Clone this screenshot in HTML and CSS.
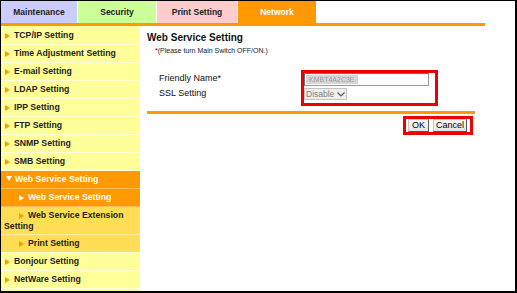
FILE: index.html
```html
<!DOCTYPE html>
<html lang="en">
<head>
    <meta charset="UTF-8">
    <title>Web Service Setting</title>
    <link rel="stylesheet" href="styles.css">
</head>
<body>
    <div class="frame">
        <div class="tabs">
            <div class="tab tab-maint">Maintenance</div>
            <div class="tab tab-sec">Security</div>
            <div class="tab tab-print">Print Setting</div>
            <div class="tab tab-net">Network</div>
        </div>

        <div class="page">
            <ul class="menu">
                <li class="item"><span class="arrow"></span>TCP/IP Setting</li>
                <li class="item"><span class="arrow"></span>Time Adjustment Setting</li>
                <li class="item"><span class="arrow"></span>E-mail Setting</li>
                <li class="item"><span class="arrow"></span>LDAP Setting</li>
                <li class="item"><span class="arrow"></span>IPP Setting</li>
                <li class="item"><span class="arrow"></span>FTP Setting</li>
                <li class="item"><span class="arrow"></span>SNMP Setting</li>
                <li class="item"><span class="arrow"></span>SMB Setting</li>
                <li class="item open"><span class="arrow down"></span>Web Service Setting</li>
                <li class="item sub current"><span class="arrow"></span>Web Service Setting</li>
                <li class="item sub wrap"><span class="arrow"></span>Web Service Extension Setting</li>
                <li class="item sub"><span class="arrow"></span>Print Setting</li>
                <li class="item"><span class="arrow"></span>Bonjour Setting</li>
                <li class="item"><span class="arrow"></span>NetWare Setting</li>
            </ul>

            <div class="main">
                <h1>Web Service Setting</h1>
                <div class="note">*(Please turn Main Switch OFF/ON.)</div>

                <div class="form">
                    <div class="labels">
                        <div>Friendly Name*</div>
                        <div class="label-ssl">SSL Setting</div>
                    </div>
                    <div class="mark">
                        <div class="field-input"><span class="blurred">KMBT4A2C3E</span></div>
                        <div class="field-select">
                            <span>Disable</span>
                            <svg width="8" height="5" viewBox="0 0 8 5"><path d="M0.5 0.5 L4 4 L7.5 0.5" fill="none" stroke="#555" stroke-width="1.1"/></svg>
                        </div>
                    </div>
                </div>

                <div class="rule"></div>

                <div class="actions">
                    <div class="mark mark-btn">
                        <button class="btn btn-ok">OK</button>
                        <button class="btn btn-cancel">Cancel</button>
                    </div>
                </div>
            </div>
        </div>
    </div>
</body>
</html>
```

FILE: styles.css
```css
body {
    margin: 0;
    font-family: 'Liberation Sans', Arial, sans-serif;
    background: #fff;
}
.frame {
    width: 517px;
    height: 293px;
    box-sizing: border-box;
    border: 1px solid #000;
    border-right-width: 2px;
    border-bottom-width: 2px;
    display: flex;
    flex-direction: column;
    overflow: hidden;
}
.tabs {
    display: flex;
    width: 484px;
    height: 22px;
    border-bottom: 3px solid #ff9900;
    flex-shrink: 0;
}
.tab {
    height: 22px;
    line-height: 22px;
    text-align: center;
    font-size: 8.5px;
    font-weight: bold;
    color: #222;
    box-sizing: border-box;
    border-right: 1px solid #fff;
}
.tab-maint { width: 77px; background: #ccccff; }
.tab-sec { width: 79px; background: #ccff99; }
.tab-print { width: 81px; background: #ffcccc; }
.tab-net { width: 78px; background: #ff9900; color: #fff; border-right: none; }

.page {
    display: flex;
    flex: 1;
}
.menu {
    list-style: none;
    margin: 0;
    padding: 1px 0 0 0;
    width: 139px;
    background: #ffff99;
    flex-shrink: 0;
}
.item {
    height: 17px;
    line-height: 17px;
    padding-left: 4px;
    font-size: 8.7px;
    font-weight: bold;
    color: #222;
    border-bottom: 1px solid #ffffd6;
    white-space: nowrap;
}
.arrow {
    display: inline-block;
    width: 0;
    height: 0;
    border-left: 5px solid #ff9900;
    border-top: 3px solid transparent;
    border-bottom: 3px solid transparent;
    margin-right: 4px;
    vertical-align: -0.5px;
}
.arrow.down {
    border-left: 3px solid transparent;
    border-right: 3px solid transparent;
    border-top: 5px solid #fff;
    border-bottom: none;
    margin-right: 3px;
    margin-left: 1px;
    vertical-align: 1px;
}
.item.sub {
    background: #ffdd55;
    padding-left: 18px;
}
.item.open, .item.current {
    background: #ff9900;
    color: #fff;
    border-bottom-color: #ffbb55;
}
.item.current .arrow {
    border-left-color: #fff;
}
.item.wrap {
    height: auto;
    line-height: 10.5px;
    padding: 3px 0 3px 3px;
    text-indent: 15px;
    white-space: normal;
    border-bottom-color: #fff0a0;
}

.main {
    flex: 1;
    padding: 6px 40px 0 7px;
}
h1 {
    margin: 0;
    font-size: 10px;
    line-height: 12px;
    color: #111;
}
.note {
    margin: 2px 0 0 8px;
    font-size: 7px;
    line-height: 9px;
    color: #222;
}
.form {
    display: flex;
    align-items: flex-start;
    margin-top: 15px;
}
.labels {
    width: 142px;
    margin-left: 12px;
    padding-top: 3px;
    font-size: 9px;
    line-height: 11px;
    color: #111;
}
.label-ssl {
    margin-top: 4px;
}
.mark {
    border: 3px solid #ee0000;
    padding: 0 6px 3px 0;
}
.field-input {
    width: 125px;
    height: 13px;
    box-sizing: border-box;
    border: 1px solid #999;
    border-top-color: #6f6f6f;
    border-left-color: #6f6f6f;
    background: #fff;
    padding-left: 1px;
    display: flex;
    align-items: center;
    overflow: hidden;
}
.blurred {
    display: block;
    background: #d6d6d6;
    color: #9a9a9a;
    font-size: 7px;
    line-height: 9px;
    padding: 0 3px;
    filter: blur(0.7px);
}
.field-select {
    margin-top: 2px;
    width: 43px;
    height: 12px;
    box-sizing: border-box;
    border: 1px solid #c4c4c4;
    background: #eeeeee;
    font-size: 8.5px;
    line-height: 10px;
    color: #808080;
    padding-left: 1px;
    display: flex;
    align-items: center;
    gap: 3px;
}
.rule {
    height: 3px;
    background: #ff9900;
    margin-top: 5px;
}
.actions {
    display: flex;
    justify-content: flex-end;
    margin-top: 2px;
}
.mark-btn {
    display: flex;
    gap: 4px;
    padding: 0 3px 0 2px;
    margin-right: 2px;
}
.btn {
    height: 13px;
    padding: 0;
    margin: 0;
    font-family: 'Liberation Sans', Arial, sans-serif;
    font-size: 9px;
    line-height: 11px;
    color: #000;
    background: linear-gradient(#fafafa, #e2e2e2);
    border: 1px solid;
    border-color: #c8c8c8 #555 #555 #c8c8c8;
    border-radius: 0;
}
.btn-ok { width: 21px; }
.btn-cancel { width: 34px; }
```
